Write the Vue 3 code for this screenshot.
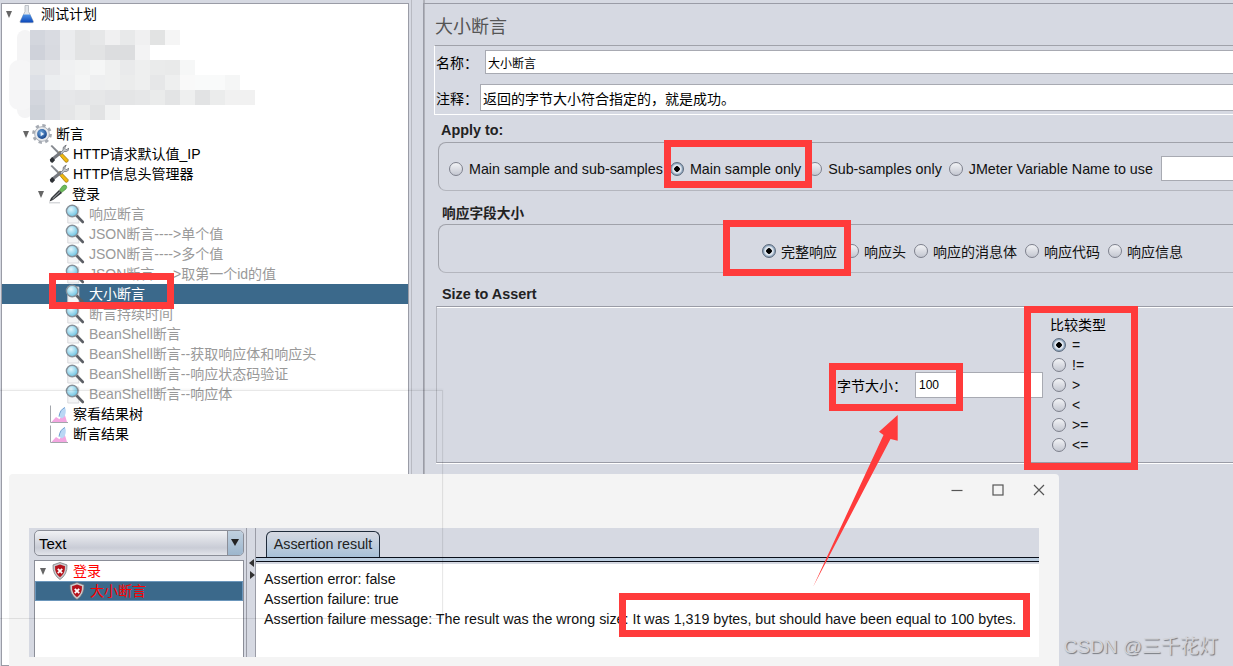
<script setup>
defineOptions({
  name: 'AssertionView'
})

// Tree rows: a = arrow left, x = icon left. Blank rows sit under the mosaic.
const treeRows = [
  { a: 6, x: 19, icon: 'flask', label: '测试计划' },
  { blank: true },
  { blank: true },
  { blank: true },
  { blank: true },
  { blank: true },
  { a: 23, x: 34, icon: 'gear', label: '断言' },
  { x: 50, icon: 'tools', label: 'HTTP请求默认值_IP' },
  { x: 50, icon: 'tools', label: 'HTTP信息头管理器' },
  { a: 38, x: 50, icon: 'dropper', label: '登录' },
  { x: 66, icon: 'lens', label: '响应断言', off: true },
  { x: 66, icon: 'lens', label: 'JSON断言---->单个值', off: true },
  { x: 66, icon: 'lens', label: 'JSON断言---->多个值', off: true },
  { x: 66, icon: 'lens', label: 'JSON断言---->取第一个id的值', off: true },
  { x: 66, icon: 'lens', label: '大小断言', selected: true },
  { x: 66, icon: 'lens', label: '断言持续时间', off: true },
  { x: 66, icon: 'lens', label: 'BeanShell断言', off: true },
  { x: 66, icon: 'lens', label: 'BeanShell断言--获取响应体和响应头', off: true },
  { x: 66, icon: 'lens', label: 'BeanShell断言--响应状态码验证', off: true },
  { x: 66, icon: 'lens', label: 'BeanShell断言--响应体', off: true },
  { x: 50, icon: 'graph', label: '察看结果树' },
  { x: 50, icon: 'graph', label: '断言结果' }
]

// Blurred part of the tree: each row starts at x and holds 15px tiles
const mosaic = [
  { y: 30, x: 30, tiles: ['#d3d6dd', '#d9dbe1', '#ebecee', '#e2e3e4', '#e6e7e8', '#f0f0f1', '#e8e9ea', '#f0f0f1', '#e2e3e3', '#f5f5f5'] },
  { y: 45, x: 30, tiles: ['#cfd2da', '#d8dae0', '#ebecee', '#e2e3e4', '#e2e3e4', '#dcdddf', '#dcdddf', '#f3f3f4'] },
  { y: 60, x: 30, tiles: ['#e3e5e8', '#e6e7ea', '#f0f1f2', '#f2f3f3', '#f5f6f6', '#eff0f0', '#e9eaeb', '#eeefef', '#eaebeb', '#e9eaea', '#f6f7f7'] },
  { y: 75, x: 30, tiles: ['#dde0e6', '#eceef0', '#eff0f1', '#f4f5f5', '#eeeff0', '#eff0f0', '#ebecec', '#eeefef', '#e6e7e8', '#eeefef', '#f9f9f9', '#f9fafa', '#f9fafa', '#f5f6f6'] },
  { y: 90, x: 30, tiles: ['#d3d6dd', '#dcdee3', '#e6e7e9', '#e4e5e7', '#e6e7e8', '#e3e4e6', '#e4e5e6', '#e6e7e8', '#eaebeb', '#e3e4e5', '#eeefef', '#e2e3e4', '#ebecec', '#f1f1f1', '#f1f1f1'] },
  { y: 105, x: 30, tiles: ['#cfd3da', '#dcdee3', '#e5e6e7', '#ebecec', '#e2e3e4', '#f1f2f2'] }
]

const applyOptions = [
  { label: 'Main sample and sub-samples' },
  { label: 'Main sample only', on: true },
  { label: 'Sub-samples only' },
  { label: 'JMeter Variable Name to use' }
]
const fieldOptions = [
  { label: '完整响应', on: true },
  { label: '响应头' },
  { label: '响应的消息体' },
  { label: '响应代码' },
  { label: '响应信息' }
]
const compareOptions = [
  { label: '=', on: true },
  { label: '!=' },
  { label: '>' },
  { label: '<' },
  { label: '>=' },
  { label: '<=' }
]
const resultLines = [
  'Assertion error: false',
  'Assertion failure: true',
  'Assertion failure message: The result was the wrong size: It was 1,319 bytes, but should have been equal to 100 bytes.'
]
</script>

<template>
  <div class="page">
    <!-- shared icons -->
    <svg class="icon-defs" width="0" height="0">
      <defs>
        <radialGradient id="glass" cx="0.4" cy="0.35" r="0.7">
          <stop offset="0" stop-color="#e4f7fd" />
          <stop offset="1" stop-color="#62bfe0" />
        </radialGradient>
        <radialGradient id="hub" cx="0.4" cy="0.35" r="0.7">
          <stop offset="0" stop-color="#6ea6dc" />
          <stop offset="1" stop-color="#123f86" />
        </radialGradient>
        <linearGradient id="liquid" x1="0" y1="0" x2="0" y2="1">
          <stop offset="0" stop-color="#4f93e6" />
          <stop offset="1" stop-color="#0b46b8" />
        </linearGradient>
      </defs>
      <symbol id="flask" viewBox="-1 -1 20 20">
        <path d="M7 0.500h3.500v6l5 10q.3 1.200-1 1.200H3q-1.300 0-1-1.200l5-10z" fill="#e3e6ea" stroke="#a8adb5" stroke-width=".7" />
        <path d="M5.300 9.500h6.900l3 7q.2 1-.8 1H3.100q-1 0-.8-1z" fill="url(#liquid)" />
      </symbol>
      <symbol id="gear" viewBox="0 0 18 18">
        <circle cx="9" cy="9" r="7.200" fill="none" stroke="#a6abb3" stroke-width="3.400" stroke-dasharray="2.800 2.860" />
        <circle cx="9" cy="9" r="6.600" fill="#e7e9ec" stroke="#a6abb3" stroke-width=".8" />
        <circle cx="9" cy="9" r="4.400" fill="url(#hub)" />
        <path d="M7.800 7v4l3.200-2z" fill="#e8f1fb" />
      </symbol>
      <symbol id="tools" viewBox="0 0 20 19">
        <path d="M1.500 1.500l1.500-1 7.500 7.300-1.500 1.500z" fill="#85898f" />
        <path d="M9 8.800l2-2 8 8.200q.7 1.700-.7 2.600-1.300.6-2.200-.4z" fill="#f0b810" stroke="#8f6c08" stroke-width=".7" />
        <path d="M12.500 7.500L3 15" stroke="#777a80" stroke-width="3.200" fill="none" />
        <path d="M.8 15l2.400-2.500 2.900 3-2.400 2.700q-2.500 .2-2.900-3.200z" fill="#2e3135" />
        <path d="M11 8.300l3-2.600q-.9-3.600 3.200-5.200l-1.500 3.200 1.500 1.500 3-1.600q-.8 4.200-5 3.400l-2.700 2.700z" fill="#c3c7cc" stroke="#5f6268" stroke-width=".7" />
      </symbol>
      <symbol id="dropper" viewBox="0 0 20 19">
        <path d="M11.500 5.500l3-4q2.300-1.700 3.800-.3 1.200 1.700-.5 3.500l-4.300 3.400z" fill="#6dbb5c" stroke="#3f8a34" stroke-width=".6" />
        <path d="M14 8.500L11 5.500 3 13.500 1.500 17l3.500-1.500z" fill="#34373b" />
        <path d="M12 7.200L4.600 14.300" stroke="#dcdfe3" stroke-width=".8" />
        <path d="M1 18.300h11" stroke="#c9cbcf" stroke-width="1.100" />
      </symbol>
      <symbol id="lens" viewBox="0 0 20 20">
        <path d="M2.800 3h11v16h-11z" fill="#f4f5f6" stroke="#d6d7da" stroke-width=".9" />
        <path d="M11.500 11.500l6.300 6.500" stroke="#5d6066" stroke-width="2.600" stroke-linecap="round" />
        <circle cx="7.200" cy="7" r="5.800" fill="url(#glass)" stroke="#87919a" stroke-width="1.400" />
      </symbol>
      <symbol id="graph" viewBox="0 0 20 20">
        <path d="M1.500 1.500v17H19" fill="none" stroke="#a3a6ac" stroke-width="1" />
        <path d="M2.500 18l4.500-5 3.500 2.200L15 8l3 10z" fill="#f3a6e0" />
        <path d="M10 12.500q1-7 6-9 1.700 4-.5 9l-2.500 2z" fill="#b9d7f5" />
        <path d="M10 12.500q1-7 6-9" fill="none" stroke="#6f9fd0" stroke-width="1" />
      </symbol>
      <symbol id="shield" viewBox="0 0 16 18">
        <path d="M8 .5l7 2.400q.6 9.500-7 14.600Q.4 12.400 1 2.900z" fill="#c9cbce" stroke="#6d6f73" stroke-width=".7" />
        <path d="M8 2.500l5 1.700q.3 7-5 11Q2.700 11.200 3 4.200z" fill="#b5121b" />
        <path d="M5.800 6.800l4.400 4.400M10.200 6.800l-4.400 4.400" stroke="#fff" stroke-width="1.800" />
      </symbol>
    </svg>

    <div class="main">
      <!-- Left Pane: test plan tree -->
      <aside class="tree-pane">
        <div
          v-for="(row, i) in treeRows"
          :key="i"
          class="tree-row"
          :class="{ selected: row.selected, off: row.off }"
          :style="{ paddingLeft: (row.a ?? row.x ?? 0) + 'px' }"
        >
          <template v-if="!row.blank">
            <span v-if="row.a" class="tree-arrow" :style="{ marginRight: row.x - row.a - 7 + 'px' }"></span>
            <svg class="tree-icon"><use :href="'#' + row.icon" /></svg>
            <span class="tree-label">{{ row.label }}</span>
          </template>
        </div>
      </aside>

      <div class="splitter"></div>

      <!-- Right Pane: assertion form -->
      <main class="form-pane">
        <h2 class="form-title">大小断言</h2>

        <div class="name-box">
          <div class="name-row">
            <label>名称：</label>
            <div class="text-field name-field">大小断言</div>
          </div>
          <div class="comment-row">
            <label>注释：</label>
            <div class="text-field comment-field">返回的字节大小符合指定的，就是成功。</div>
          </div>
        </div>

        <h3 class="group-title apply-title">Apply to:</h3>
        <div class="group">
          <div class="radio-line apply-line">
            <div v-for="opt in applyOptions" :key="opt.label" class="radio-item">
              <span class="radio" :class="{ on: opt.on }"></span>{{ opt.label }}
            </div>
            <div class="text-field var-field"></div>
          </div>
        </div>

        <h3 class="group-title">响应字段大小</h3>
        <div class="group">
          <div class="radio-line field-line">
            <div v-for="opt in fieldOptions" :key="opt.label" class="radio-item">
              <span class="radio" :class="{ on: opt.on }"></span>{{ opt.label }}
            </div>
          </div>
        </div>

        <h3 class="group-title size-title">Size to Assert</h3>
        <div class="size-group">
          <label class="size-label">字节大小：</label>
          <div class="text-field size-field">100</div>
          <div class="compare-col">
            <div class="compare-title">比较类型</div>
            <div v-for="opt in compareOptions" :key="opt.label" class="radio-item compare-item">
              <span class="radio" :class="{ on: opt.on }"></span>{{ opt.label }}
            </div>
          </div>
        </div>
      </main>
    </div>

    <!-- Blurred tree rows -->
    <svg class="mosaic" width="260" height="100" viewBox="0 20 260 100">
      <rect x="17" y="30" width="16" height="88" rx="8" fill="#f4f4f5" />
      <rect x="9" y="60" width="24" height="50" rx="10" fill="#f6f6f7" />
      <rect x="235" y="90" width="18" height="15" rx="7" fill="#f1f1f1" />
      <template v-for="line in mosaic" :key="line.y">
        <rect
          v-for="(tile, i) in line.tiles"
          :key="i"
          :x="line.x + i * 15"
          :y="line.y"
          width="15"
          height="15"
          :fill="tile"
        />
      </template>
    </svg>

    <!-- Floating result window -->
    <section class="result-window">
      <header class="window-bar">
        <button class="win-btn">
          <svg width="14" height="14" viewBox="0 0 14 14"><path d="M1.500 7.500h11" stroke="#555" stroke-width="1.200" /></svg>
        </button>
        <button class="win-btn">
          <svg width="14" height="14" viewBox="0 0 14 14"><rect x="2" y="2" width="10" height="10" fill="none" stroke="#555" stroke-width="1.200" /></svg>
        </button>
        <button class="win-btn">
          <svg width="14" height="14" viewBox="0 0 14 14"><path d="M2 2l10 10M12 2L2 12" stroke="#555" stroke-width="1.200" /></svg>
        </button>
      </header>

      <div class="window-body">
        <div class="result-left">
          <div class="combo">
            <span>Text</span>
            <span class="combo-btn"></span>
          </div>
          <div class="result-tree">
            <div class="result-row first">
              <span class="tree-arrow result-arrow"></span>
              <svg class="shield"><use href="#shield" /></svg>
              <span class="tree-label">登录</span>
            </div>
            <div class="result-row second">
              <svg class="shield"><use href="#shield" /></svg>
              <span class="tree-label">大小断言</span>
            </div>
          </div>
        </div>

        <div class="result-split">
          <span class="split-left"></span>
          <span class="split-right"></span>
        </div>

        <div class="result-right">
          <div class="tab-strip">
            <div class="tab">Assertion result</div>
          </div>
          <div class="tab-rule"></div>
          <div class="result-text">
            <div v-for="line in resultLines" :key="line">{{ line }}</div>
          </div>
        </div>
      </div>
    </section>

    <!-- Faint screenshot selection edge -->
    <div class="selection-edge"></div>

    <!-- Red markup drawn over the screenshot -->
    <div class="mark mark-tree"></div>
    <div class="mark mark-apply"></div>
    <div class="mark mark-field"></div>
    <div class="mark mark-size"></div>
    <div class="mark mark-compare"></div>
    <div class="mark mark-result"></div>
    <svg class="mark-arrow" width="1233" height="666" viewBox="0 0 1233 666">
      <polygon points="897.700,415 879,431.700 883.500,435 813,587 890.500,439 897.700,440.700" fill="#ff3b3b" />
    </svg>

    <div class="watermark">CSDN @三千花灯</div>
  </div>
</template>

<style scoped>
.page {
  position: relative;
  width: 1233px;
  height: 666px;
  overflow: hidden;
  background-color: #d6d9e2;
  font-family: 'Liberation Sans', 'Noto Sans CJK SC', sans-serif;
  font-size: 14px;
  color: #000;
}

.icon-defs {
  position: absolute;
}

.main {
  display: flex;
  height: 100%;
}

/* Tree */
.tree-pane {
  flex: 0 0 408px;
  margin: 3px 0 0 1px;
  box-sizing: border-box;
  background-color: #fff;
  border: 1px solid #9a9ca6;
  overflow: hidden;
}
.tree-row {
  display: flex;
  align-items: center;
  height: 20px;
  box-sizing: border-box;
  margin-left: -2px;
  white-space: nowrap;
}
.tree-row.off {
  color: #999;
}
.tree-row.selected {
  background-color: #3b698b;
  color: #fff;
}
.tree-arrow {
  flex: none;
  width: 0;
  height: 0;
  border-left: 3.5px solid transparent;
  border-right: 3.5px solid transparent;
  border-top: 7px solid #666;
}
.tree-icon {
  flex: none;
  width: 20px;
  height: 20px;
  margin: 0 4px 0 -1px;
}
.tree-label {
  margin-top: -2px;
}

/* Divider between panes */
.splitter {
  flex: 0 0 14px;
  box-sizing: border-box;
  border-left: 1px solid #b8bac2;
  border-right: 2px solid #b0b2ba;
  margin-left: 2px;
  margin-right: -2px;
}

/* Form */
.form-pane {
  flex: 1;
  min-width: 0;
  margin-top: 3px;
  border-top: 1px solid #9a9ca6;
  border-left: 1px solid #9a9ca6;
  overflow: hidden;
}
.form-title {
  margin: 0;
  height: 41px;
  padding: 9px 0 0 11px;
  box-sizing: border-box;
  font-size: 18px;
  line-height: 28px;
  font-weight: 400;
  color: #555;
}
.name-box {
  margin-left: 10px;
  margin-right: -10px;
  height: 70px;
  box-sizing: border-box;
  padding: 4px 0 0 1px;
  border: 1px solid #fff;
  border-top-color: #a0a2aa;
}
.name-row,
.comment-row {
  display: flex;
  align-items: center;
}
.name-row {
  height: 24px;
  margin-bottom: 10px;
}
.comment-row {
  height: 27px;
}
.name-row label {
  flex: 0 0 49px;
}
.comment-row label {
  flex: 0 0 44px;
}
.text-field {
  box-sizing: border-box;
  background-color: #fff;
  border: 1px solid #a8aab2;
  font-size: 12px;
  display: flex;
  align-items: center;
  padding-left: 2px;
  white-space: nowrap;
}
.name-field {
  flex: 1;
  height: 24px;
}
.comment-field {
  flex: 1;
  height: 27px;
  font-size: 14px;
}
.group-title {
  margin: 0;
  height: 33px;
  padding: 13px 0 0 18px;
  box-sizing: border-box;
  font-size: 13.700px;
  line-height: 19px;
  font-weight: 700;
  color: #222;
}
.apply-title {
  height: 27px;
  padding-top: 6px;
  padding-left: 17px;
  font-size: 14.400px;
}
.size-title {
  padding-top: 12px;
  font-size: 14.400px;
}
.group {
  margin: 0 -20px 0 14px;
  height: 49px;
  box-sizing: border-box;
  padding-top: 4px;
  border: 1px solid #a0a2aa;
  border-bottom-color: #b4b6be;
  border-radius: 8px;
}
.radio-line {
  display: flex;
  align-items: center;
  height: 100%;
  white-space: nowrap;
}
.apply-line {
  padding-left: 10px;
  column-gap: 7px;
  font-size: 14.300px;
}
.field-line {
  padding-left: 323px;
  column-gap: 8px;
}
.field-line .radio-item {
  column-gap: 5px;
}
.radio-item {
  display: flex;
  align-items: center;
  column-gap: 6px;
  color: #111;
}
.radio {
  flex: none;
  width: 14px;
  height: 14px;
  box-sizing: border-box;
  border: 1px solid #7d808c;
  border-radius: 50%;
  background: linear-gradient(#f2f3f6, #c4c7d1);
}
.radio.on {
  border-color: #5d6a7c;
  background: radial-gradient(circle, #000 0 2.500px, #e1e7ef 3px 4px, #8fa6bd 5.500px);
}
.var-field {
  flex: none;
  width: 120px;
  height: 25px;
  margin-left: 1px;
}

.size-group {
  display: flex;
  align-items: center;
  height: 157px;
  box-sizing: border-box;
  margin-left: 12px;
  margin-right: -10px;
  padding-left: 400px;
  border-top: 1px solid #9a9ca6;
  border-bottom: 1px solid #9a9ca6;
  box-shadow: inset 0 1px #fff, 0 1px #fff;
  border-left: 1px solid #b4b6be;
}
.size-label {
  flex: 0 0 78px;
}
.size-field {
  flex: 0 0 128px;
  height: 26px;
  padding-left: 3px;
}
.compare-col {
  margin-left: 7px;
}
.compare-title {
  height: 20px;
  line-height: 20px;
}
.compare-item {
  height: 20px;
  padding-left: 2px;
}

/* Mosaic */
.mosaic {
  position: absolute;
  left: 0;
  top: 20px;
}

/* Result window */
.result-window {
  position: absolute;
  left: 9px;
  top: 474px;
  width: 1050px;
  height: 192px;
  box-sizing: border-box;
  padding: 0 20px 9px;
  background-color: #f4f4f4;
  border-radius: 4px 4px 0 0;
  display: flex;
  flex-direction: column;
}
.window-bar {
  display: flex;
  justify-content: flex-end;
  height: 32px;
  margin-right: -20px;
  margin-bottom: 22px;
}
.win-btn {
  display: flex;
  align-items: center;
  justify-content: center;
  width: 41px;
  height: 32px;
  padding: 0;
  border: none;
  background: none;
}
.window-body {
  flex: 1;
  min-height: 0;
  display: flex;
  background-color: #d6d9e2;
}
.result-left {
  flex: 0 0 215px;
  box-sizing: border-box;
  padding: 2px 0 0 5px;
  display: flex;
  flex-direction: column;
  row-gap: 4px;
}
.combo {
  display: flex;
  align-items: center;
  justify-content: space-between;
  height: 26px;
  flex: none;
  box-sizing: border-box;
  padding-left: 4px;
  font-size: 15px;
  border: 1px solid #8b8e98;
  border-radius: 5px;
  background: linear-gradient(#f0f1f4, #c9ccd6 70%, #e2e4ea);
  overflow: hidden;
}
.combo-btn {
  position: relative;
  width: 15px;
  height: 100%;
  background: linear-gradient(#c0d0df, #9db6cd);
  border-left: 1px solid #8b8e98;
}
.combo-btn::after {
  content: '';
  position: absolute;
  left: 3px;
  top: 8px;
  border-left: 4px solid transparent;
  border-right: 4px solid transparent;
  border-top: 7px solid #222;
}
.result-tree {
  flex: 1;
  box-sizing: border-box;
  background-color: #fff;
  border: 1px solid #8b8e98;
  border-bottom: none;
  width: 210px;
}
.result-row {
  display: flex;
  align-items: center;
  height: 20px;
  box-sizing: border-box;
  color: #f00;
}
.result-row.first {
  padding-left: 5px;
}
.result-row.second {
  background-color: #3b698b;
  border: 1px solid #6b96bb;
  padding-left: 33px;
}
.result-arrow {
  margin-right: 6px;
}
.shield {
  flex: none;
  width: 16px;
  height: 18px;
  margin-right: 5px;
}
.result-split {
  flex: 0 0 10px;
  box-sizing: border-box;
  position: relative;
  border-left: 1px solid #9a9ca6;
  border-right: 1px solid #9a9ca6;
  margin-left: 2px;
}
.split-left,
.split-right {
  position: absolute;
  left: 2px;
  width: 0;
  height: 0;
  border-top: 4px solid transparent;
  border-bottom: 4px solid transparent;
}
.split-left {
  top: 31px;
  border-right: 5px solid #333;
}
.split-right {
  top: 43px;
  left: 3px;
  border-left: 5px solid #333;
}
.result-right {
  flex: 1;
  min-width: 0;
  display: flex;
  flex-direction: column;
}
.tab-strip {
  height: 29px;
  flex: none;
  padding-left: 10px;
  box-sizing: border-box;
  padding-top: 3px;
}
.tab {
  width: 114px;
  height: 26px;
  box-sizing: border-box;
  text-align: center;
  line-height: 25px;
  font-size: 14.300px;
  color: #222;
  border: 1px solid #1f2b3a;
  border-bottom: none;
  border-radius: 6px 6px 0 0;
  background: linear-gradient(#d6d9e2, #a8c1d8);
}
.tab-rule {
  flex: none;
  height: 5px;
  box-sizing: border-box;
  background-color: #bccee0;
  border-top: 1px solid #0a0f1a;
  border-bottom: 1px solid #0a0f1a;
  margin-bottom: 2px;
}
.result-text {
  flex: 1;
  background-color: #fff;
  padding: 5px 0 0 8px;
  line-height: 20px;
  font-size: 14.280px;
  white-space: nowrap;
  color: #111;
}

/* Faint selection edge */
.selection-edge {
  position: absolute;
  left: -1px;
  top: 390px;
  width: 442px;
  height: 227px;
  border: 1px solid rgba(0, 0, 0, 0.09);
  box-shadow: 0 -1px 2px rgba(0, 0, 0, 0.04);
  pointer-events: none;
}

/* Red markup */
.mark {
  position: absolute;
  box-sizing: border-box;
  border: 7px solid #ff3b3b;
}
.mark-tree { left: 49px; top: 273px; width: 125px; height: 36px; }
.mark-apply { left: 664px; top: 140px; width: 148px; height: 48px; }
.mark-field { left: 723px; top: 220px; width: 128px; height: 56px; }
.mark-size { left: 829px; top: 363px; width: 134px; height: 48px; }
.mark-compare { left: 1024px; top: 306px; width: 114px; height: 164px; }
.mark-result { left: 619px; top: 593px; width: 411px; height: 44px; }
.mark-arrow {
  position: absolute;
  left: 0;
  top: 0;
  pointer-events: none;
}

.watermark {
  position: absolute;
  right: 15px;
  top: 635px;
  font-size: 19px;
  line-height: 24px;
  color: #d2d3d8;
  text-shadow: 1px 1px 1px #77797f;
}
</style>
